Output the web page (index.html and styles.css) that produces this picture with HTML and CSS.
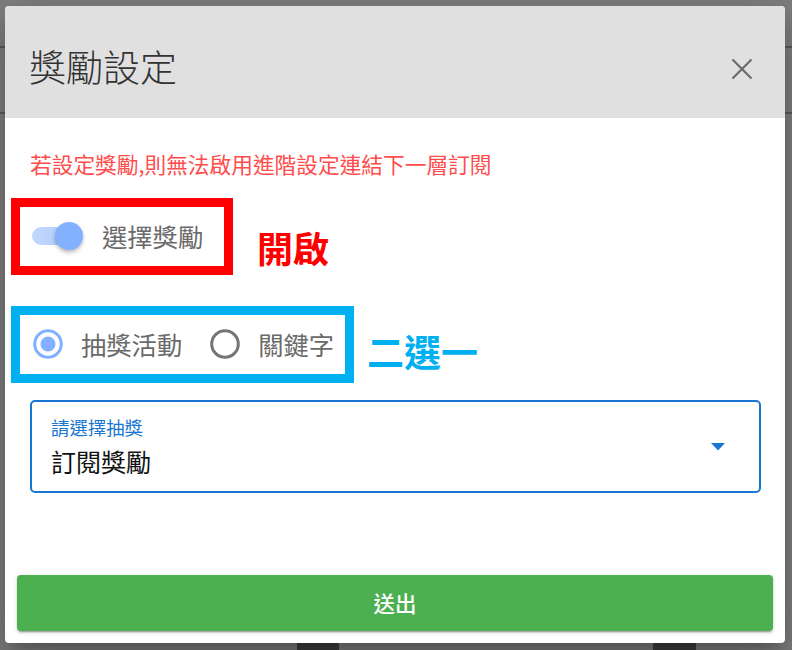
FILE: index.html
```html
<!DOCTYPE html>
<html lang="zh-Hant">
<head>
<meta charset="utf-8">
<title>獎勵設定</title>
<link rel="stylesheet" href="styles.css">
</head>
<body>
<div class="bg">
  <div class="bg-bar1"></div>
  <div class="bg-bar2"></div>
  <div class="bg-foot">
    <div class="bg-block b1"></div>
    <div class="bg-block b2"></div>
  </div>
</div>

<div class="dialog">
  <div class="dlg-head">
    <div class="dlg-title">獎勵設定</div>
    <svg class="dlg-close" width="22" height="22" viewBox="0 0 22 22" aria-hidden="true">
      <path d="M1.5 1.5 L20.5 20.5 M20.5 1.5 L1.5 20.5" stroke="#6b6b6b" stroke-width="2.2" fill="none"/>
    </svg>
  </div>

  <div class="dlg-body">
    <div class="warn">若設定獎勵,則無法啟用進階設定連結下一層訂閱</div>

    <div class="anno-row">
      <div class="box box-red">
        <div class="switch">
          <div class="switch-track"></div>
          <div class="switch-thumb"></div>
        </div>
        <div class="ctl-label">選擇獎勵</div>
      </div>
      <div class="note note-red">開啟</div>
    </div>

    <div class="anno-row row-radio">
      <div class="box box-blue">
        <svg class="radio" width="30" height="30" viewBox="0 0 30 30" aria-hidden="true">
          <circle cx="15" cy="15" r="13.3" stroke="#82b1ff" stroke-width="3" fill="none"/>
          <circle cx="15" cy="15" r="7.5" fill="#82b1ff"/>
        </svg>
        <div class="ctl-label">抽獎活動</div>
        <svg class="radio radio-2" width="30" height="30" viewBox="0 0 30 30" aria-hidden="true">
          <circle cx="15" cy="15" r="13.3" stroke="#757575" stroke-width="3" fill="none"/>
        </svg>
        <div class="ctl-label">關鍵字</div>
      </div>
      <div class="note note-blue">二選一</div>
    </div>

    <div class="select">
      <div class="select-text">
        <div class="select-label">請選擇抽獎</div>
        <div class="select-value">訂閱獎勵</div>
      </div>
      <svg class="select-arrow" width="14" height="8" viewBox="0 0 14 8" aria-hidden="true">
        <path d="M0 0 L14 0 L7 7.5 Z" fill="#1976d2"/>
      </svg>
    </div>

    <div class="submit">送出</div>
  </div>
</div>
</body>
</html>
```

FILE: styles.css
```css
html, body {
  margin: 0;
  padding: 0;
}

body {
  width: 792px;
  height: 650px;
  overflow: hidden;
  background: #7f7f7f;
  font-family: "Noto Sans CJK TC", "Noto Sans", sans-serif;
  position: relative;
}

/* page behind the overlay */
.bg {
  height: 650px;
  display: flex;
  flex-direction: column;
}

.bg-bar1 {
  height: 46px;
  border-bottom: 2px solid #5a5a5a;
}

.bg-bar2 {
  height: 64px;
  border-bottom: 2px solid #5a5a5a;
}

.bg-foot {
  margin-top: auto;
  display: flex;
  height: 7px;
}

.bg-block {
  height: 7px;
  background: #3f3f3f;
}

.b1 {
  margin-left: 297px;
  width: 42px;
}

.b2 {
  margin-left: 314px;
  width: 43px;
}

/* dialog */
.dialog {
  position: absolute;
  left: 5px;
  top: 6px;
  width: 780px;
  height: 637px;
  background: #fff;
  border-radius: 4px;
  overflow: hidden;
  box-shadow: 0 11px 15px -7px rgba(0,0,0,.2), 0 24px 38px 3px rgba(0,0,0,.14), 0 9px 46px 8px rgba(0,0,0,.12);
  display: flex;
  flex-direction: column;
}

.dlg-head {
  height: 112px;
  box-sizing: border-box;
  background: #e0e0e0;
  display: flex;
  justify-content: space-between;
  align-items: flex-start;
  padding: 42px 32px 0 24px;
}

.dlg-title {
  font-size: 37px;
  line-height: 37px;
  color: #333;
  font-weight: 300;
}

.dlg-close {
  margin-top: 10px;
}

.dlg-body {
  display: flex;
  flex-direction: column;
}

.warn {
  margin: 35px 0 0 25px;
  font-size: 21.7px;
  line-height: 21.7px;
  color: #ff4c4c;
}

.anno-row {
  display: flex;
  align-items: flex-start;
  margin: 23px 0 0 6px;
}

.row-radio {
  margin-top: 31px;
}

.box {
  display: flex;
  align-items: center;
  height: 59px;
  border: 9px solid;
}

.box-red {
  border-color: #ff0000;
  width: 204px;
  padding-left: 12px;
  box-sizing: content-box;
}

.box-red {
  width: 192px;
}

.box-blue {
  border-color: #00b0f0;
  width: 312px;
  padding-left: 13px;
}

.switch {
  position: relative;
  width: 54px;
  height: 28px;
  margin-right: 16px;
  display: flex;
  align-items: center;
}

.switch-track {
  width: 48px;
  height: 18px;
  border-radius: 9px;
  background: linear-gradient(90deg, #c3d9fd, #a9c7fb);
}

.switch-thumb {
  position: absolute;
  left: 23px;
  top: 0;
  width: 28px;
  height: 28px;
  border-radius: 50%;
  background: #82b1ff;
  box-shadow: 0 2px 4px -1px rgba(0,0,0,.25), 0 3px 5px rgba(0,0,0,.12);
}

.ctl-label {
  font-size: 25.3px;
  line-height: 25.3px;
  color: #6a6a6a;
}

.radio {
  margin-right: 18px;
}

.radio-2 {
  margin-left: 28px;
}

.note {
  font-weight: 700;
}

.note-red {
  margin: 31px 0 0 24px;
  font-size: 36px;
  line-height: 36px;
  color: #ff0000;
}

.note-blue {
  margin: 27px 0 0 13px;
  font-size: 37px;
  line-height: 37px;
  color: #00b0f0;
}

.select {
  margin: 17px 24px 0 25px;
  height: 93px;
  box-sizing: border-box;
  border: 2px solid #1976d2;
  border-radius: 5px;
  display: flex;
  align-items: center;
  padding: 0 34px 0 19px;
}

.select-text {
  flex: 1;
  display: flex;
  flex-direction: column;
}

.select-label {
  font-size: 18.4px;
  line-height: 18.4px;
  color: #1976d2;
}

.select-value {
  margin-top: 13px;
  font-size: 25px;
  line-height: 25px;
  color: #111;
}

.select-arrow {
  margin-top: 2px;
}

.submit {
  margin: 82px 12px 0 12px;
  height: 56px;
  background: #4caf50;
  border-radius: 4px;
  color: #fff;
  font-size: 21.5px;
  font-weight: 500;
  display: flex;
  align-items: center;
  justify-content: center;
  box-shadow: 0 3px 1px -2px rgba(0,0,0,.2), 0 2px 2px 0 rgba(0,0,0,.14), 0 1px 5px 0 rgba(0,0,0,.12);
}
```
